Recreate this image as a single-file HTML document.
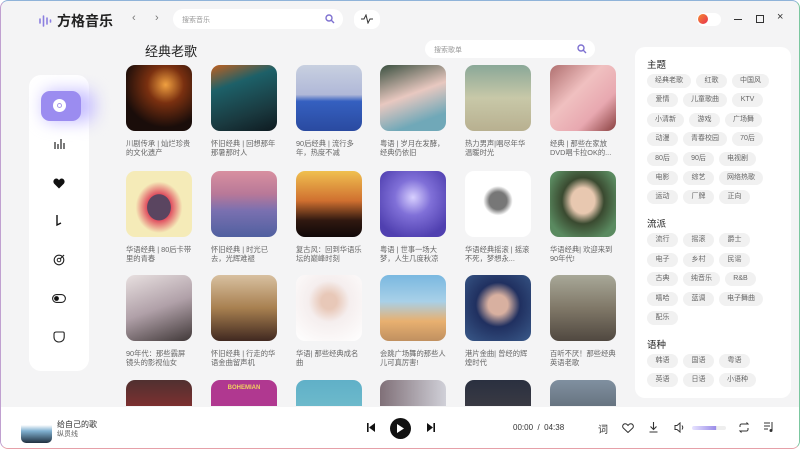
<!DOCTYPE html>
<html><head><meta charset="utf-8"><style>
*{margin:0;padding:0;box-sizing:border-box}
body{width:800px;height:449px;overflow:hidden;background:#fff;font-family:"Liberation Sans","Noto Sans CJK SC",sans-serif}
#win{position:absolute;left:0;top:0;width:800px;height:449px;border-radius:8px;background:#f4f4f5;border:1.5px solid;border-color:#8fb3d9 #7cc7a0 #e6a0a8 #c0a0d0;overflow:hidden}
.abs{position:absolute}
.logo{left:38px;top:10px;font-size:14px;font-weight:bold;color:#222;display:flex;align-items:center;gap:4px}
.search{background:#fff;border-radius:10px;height:20px;font-size:7px;color:#999;padding:6px 0 0 9px}
.card{position:absolute;width:66px}
.card .im{width:66px;height:66px;border-radius:9px}
.card .t{font-size:7.3px;line-height:9px;color:#666;margin-top:8px;height:18px;overflow:hidden}
.side{left:28px;top:74px;width:60px;height:296px;background:#fff;border-radius:12px}
.rp{left:634px;top:46px;width:156px;height:351px;background:#fff;border-radius:10px;padding:10px 0 0 12px}
.rp h4{font-size:9.5px;font-weight:normal;color:#222;margin:0 0 3px}
.tags{display:flex;flex-wrap:wrap;width:128px;gap:5.4px 5px;margin-bottom:12px}
.tags span{background:#f1f1f1;border-radius:7px;height:14px;font-size:7px;color:#666;padding:3px 8px;min-width:31px;text-align:center;line-height:8px;white-space:nowrap}
.bar{left:0;top:406px;width:800px;height:43px;background:#fff}
</style></head><body><div id="win">
<div class="abs logo"><svg width="14" height="12" viewBox="0 0 14 12"><g stroke="#8b7fe0" stroke-width="1.6" stroke-linecap="round"><line x1="1" y1="4" x2="1" y2="8"/><line x1="4.5" y1="1" x2="4.5" y2="11"/><line x1="8" y1="3" x2="8" y2="9"/><line x1="11.5" y1="5" x2="11.5" y2="7"/></g></svg>方格音乐</div>
<div class="abs" style="left:131px;top:11px;font-size:11px;color:#777">‹</div>
<div class="abs" style="left:154px;top:11px;font-size:11px;color:#777">›</div>
<div class="abs search" style="left:172px;top:8px;width:170px">搜索音乐</div>
<svg class="abs" style="left:324px;top:13px" width="10" height="10" viewBox="0 0 10 10"><circle cx="4" cy="4" r="3" fill="none" stroke="#7d70d0" stroke-width="1.4"/><line x1="6.3" y1="6.3" x2="9" y2="9" stroke="#7d70d0" stroke-width="1.4"/></svg>
<div class="abs" style="left:353px;top:9px;width:26px;height:19px;background:#fff;border-radius:8px"></div>
<svg class="abs" style="left:360px;top:13px" width="12" height="10" viewBox="0 0 12 10"><path d="M0 5H3L5 1L7 9L9 5H12" fill="none" stroke="#333" stroke-width="1"/></svg>
<div class="abs" style="left:696px;top:12px;width:24px;height:13px;border-radius:7px;background:#fff"></div>
<div class="abs" style="left:697px;top:13px;width:10px;height:10px;border-radius:50%;background:linear-gradient(135deg,#f58a30,#e83050)"></div>
<div class="abs" style="left:733px;top:18px;width:8px;height:1.3px;background:#333"></div>
<div class="abs" style="left:755px;top:14px;width:8px;height:8px;border:1.3px solid #333"></div>
<div class="abs" style="left:776px;top:10px;font-size:11px;color:#333">×</div>

<div class="abs" style="left:144px;top:40px;font-size:13px;color:#222">经典老歌</div>
<div class="abs search" style="left:424px;top:39px;width:170px;height:18px;padding-top:5px">搜索歌单</div>
<svg class="abs" style="left:576px;top:43px" width="10" height="10" viewBox="0 0 10 10"><circle cx="4" cy="4" r="3" fill="none" stroke="#7d70d0" stroke-width="1.4"/><line x1="6.3" y1="6.3" x2="9" y2="9" stroke="#7d70d0" stroke-width="1.4"/></svg>

<div class="abs side"></div>
<div class="abs" style="left:42px;top:89px;width:52px;height:32px;border-radius:10px;background:#c8c0ff;filter:blur(8px)"></div>
<div class="abs" style="left:40px;top:90px;width:40px;height:30px;border-radius:9px;background:#9b8cf0"></div>
<div class="abs" style="left:52px;top:98px;width:13px;height:13px;border-radius:50%;background:#fff"></div>
<div class="abs" style="left:56px;top:102px;width:5px;height:5px;border-radius:50%;border:1px solid #a89ae8"></div>
<svg class="abs" style="left:52px;top:137px" width="12" height="12" viewBox="0 0 12 12"><g stroke="#222" stroke-width="1.2"><line x1="2" y1="4" x2="2" y2="11"/><line x1="5" y1="6" x2="5" y2="11"/><line x1="8" y1="1" x2="8" y2="11"/><line x1="11" y1="5" x2="11" y2="11"/></g></svg>
<svg class="abs" style="left:52px;top:177px" width="12" height="11" viewBox="0 0 12 11"><path d="M6 10.5L1 5.5C-0.5 3.5 1 0.5 3.3 0.5C4.7 0.5 5.5 1.5 6 2.3C6.5 1.5 7.3 0.5 8.7 0.5C11 0.5 12.5 3.5 11 5.5Z" fill="#111"/></svg>
<svg class="abs" style="left:54px;top:214px" width="8" height="12" viewBox="0 0 8 12"><path d="M2 0V10L6 8" fill="none" stroke="#111" stroke-width="1.4"/></svg>
<svg class="abs" style="left:52px;top:253px" width="12" height="12" viewBox="0 0 12 12"><circle cx="6" cy="6" r="4.8" fill="none" stroke="#222" stroke-width="1.1"/><circle cx="6" cy="6" r="1.8" fill="none" stroke="#222" stroke-width="1"/><line x1="7" y1="5" x2="11" y2="1" stroke="#222" stroke-width="1.2"/></svg>
<svg class="abs" style="left:51px;top:293px" width="14" height="9" viewBox="0 0 14 9"><rect x="0.6" y="0.6" width="12.8" height="7.8" rx="3.9" fill="none" stroke="#222" stroke-width="1.1"/><circle cx="4.5" cy="4.5" r="2.4" fill="#111"/></svg>
<svg class="abs" style="left:52px;top:330px" width="12" height="12" viewBox="0 0 12 12"><path d="M1 3C1 1.5 2 1 3.5 1H10C11 1 11.2 1.5 11.2 2.5V6C11.2 9 9 11 6 11C3 11 1 9 1 6Z" fill="none" stroke="#222" stroke-width="1.1"/></svg>

<div class="abs" style="left:0;top:0;width:630px;height:405px;overflow:hidden">
<div class="card" style="left:125px;top:64px"><div class="im" style="background:radial-gradient(circle at 60% 30%,#f0a040,#7a3010 30%,#1a0d0a 70%)"></div><div class="t">川剧传承 | 灿烂珍贵的文化遗产</div></div>
<div class="card" style="left:210px;top:64px"><div class="im" style="background:linear-gradient(160deg,#c06020 0%,#1d6068 30%,#1a3a40 70%,#0e1a20)"></div><div class="t">怀旧经典 | 回想那年那暑那时人</div></div>
<div class="card" style="left:295px;top:64px"><div class="im" style="background:linear-gradient(180deg,#c8d0e0 0%,#b0b8d8 45%,#3560c0 55%,#2a4aa0)"></div><div class="t">90后经典 | 流行多年，热度不减</div></div>
<div class="card" style="left:379px;top:64px"><div class="im" style="background:linear-gradient(160deg,#3a5040,#e8c8c0 45%,#70a8b8 80%)"></div><div class="t">粤语 | 岁月在发酵，经典仍依旧</div></div>
<div class="card" style="left:464px;top:64px"><div class="im" style="background:linear-gradient(180deg,#8aa898,#c8c8a8 50%,#b8b090)"></div><div class="t">热力男声|唱尽年华温暖时光</div></div>
<div class="card" style="left:549px;top:64px"><div class="im" style="background:linear-gradient(135deg,#b07070,#f0c0c0 40%,#e8a8b0 70%,#8a4040)"></div><div class="t">经典 | 那些在家放DVD唱卡拉OK的...</div></div>

<div class="card" style="left:125px;top:170px"><div class="im" style="background:radial-gradient(ellipse at 50% 55%,#5a4560 25%,#e05060 26%,#f5ebb8 50%)"></div><div class="t">华语经典 | 80后卡带里的青春</div></div>
<div class="card" style="left:210px;top:170px"><div class="im" style="background:linear-gradient(180deg,#d890a0,#b87898 35%,#7a70b0 60%,#5060a0)"></div><div class="t">怀旧经典 | 时光已去，光辉难褪</div></div>
<div class="card" style="left:295px;top:170px"><div class="im" style="background:linear-gradient(180deg,#f0c050,#d07030 45%,#301810 75%,#100808)"></div><div class="t">复古风：回到华语乐坛的巅峰时刻</div></div>
<div class="card" style="left:379px;top:170px"><div class="im" style="background:radial-gradient(circle at 50% 40%,#d8d0ff,#8070d8 35%,#5040b0 80%)"></div><div class="t">粤语 | 世事一场大梦，人生几度秋凉</div></div>
<div class="card" style="left:464px;top:170px"><div class="im" style="background:radial-gradient(circle at 50% 45%,#777 18%,#fff 30%)"></div><div class="t">华语经典摇滚 | 摇滚不死，梦想永...</div></div>
<div class="card" style="left:549px;top:170px"><div class="im" style="background:radial-gradient(ellipse at 50% 45%,#e8c8b0 25%,#3a4a30 45%,#5a8a60 80%)"></div><div class="t">华语经典| 欢迎来到 90年代!</div></div>

<div class="card" style="left:125px;top:274px"><div class="im" style="background:linear-gradient(160deg,#e8e0e0,#b0a0a8 50%,#403838)"></div><div class="t">90年代：那些霸屏镜头的影视仙女</div></div>
<div class="card" style="left:210px;top:274px"><div class="im" style="background:linear-gradient(180deg,#d8c0a0,#a88050 50%,#402820)"></div><div class="t">怀旧经典 | 行走的华语金曲留声机</div></div>
<div class="card" style="left:295px;top:274px"><div class="im" style="background:radial-gradient(circle at 50% 40%,#e8c8b8 15%,#f5eeee 40%,#fff)"></div><div class="t">华语| 那些经典成名曲</div></div>
<div class="card" style="left:379px;top:274px"><div class="im" style="background:linear-gradient(180deg,#7ab8e0,#a8d0e8 40%,#e8b070 70%,#c09060)"></div><div class="t">会跳广场舞的那些人儿可真厉害!</div></div>
<div class="card" style="left:464px;top:274px"><div class="im" style="background:radial-gradient(circle at 50% 45%,#d8b0a0 20%,#203060 45%,#3a5a8a)"></div><div class="t">港片金曲| 曾经的辉煌时代</div></div>
<div class="card" style="left:549px;top:274px"><div class="im" style="background:linear-gradient(180deg,#a8a898,#807868 50%,#504840)"></div><div class="t">百听不厌！那些经典英语老歌</div></div>

<div class="card" style="left:125px;top:379px"><div class="im" style="background:linear-gradient(180deg,#503030,#c03030)"></div></div>
<div class="card" style="left:210px;top:379px"><div class="im" style="background:#b03890"><div style="color:#f0d060;font-size:6px;font-weight:bold;text-align:center;padding-top:5px">BOHEMIAN</div></div></div>
<div class="card" style="left:295px;top:379px"><div class="im" style="background:linear-gradient(180deg,#60b0c8,#80c8d0)"></div></div>
<div class="card" style="left:379px;top:379px"><div class="im" style="background:linear-gradient(90deg,#807078,#d0d0d8)"></div></div>
<div class="card" style="left:464px;top:379px"><div class="im" style="background:linear-gradient(180deg,#2a3040,#504848)"></div></div>
<div class="card" style="left:549px;top:379px"><div class="im" style="background:linear-gradient(180deg,#8090a0,#404850)"></div></div>
</div>

<div class="abs rp">
<h4>主题</h4>
<div class="tags"><span>经典老歌</span><span>红歌</span><span>中国风</span><span>爱情</span><span>儿童歌曲</span><span>KTV</span><span>小清新</span><span>游戏</span><span>广场舞</span><span>动漫</span><span>青春校园</span><span>70后</span><span>80后</span><span>90后</span><span>电视剧</span><span>电影</span><span>综艺</span><span>网络热歌</span><span>运动</span><span>厂牌</span><span>正向</span></div>
<h4>流派</h4>
<div class="tags"><span>流行</span><span>摇滚</span><span>爵士</span><span>电子</span><span>乡村</span><span>民谣</span><span>古典</span><span>纯音乐</span><span>R&amp;B</span><span>嘻哈</span><span>蓝调</span><span>电子舞曲</span><span>配乐</span></div>
<h4>语种</h4>
<div class="tags"><span>韩语</span><span>国语</span><span>粤语</span><span>英语</span><span>日语</span><span>小语种</span></div>
</div>

<div class="abs bar"></div>
<div class="abs" style="left:20px;top:412px;width:31px;height:30px;border-radius:5px;background:linear-gradient(180deg,#fff 40%,#80b0d0 60%,#203040)"></div>
<div class="abs" style="left:56px;top:418px;font-size:8px;color:#333">给自己的歌</div>
<div class="abs" style="left:56px;top:428px;font-size:7px;color:#666">纵贯线</div>
<svg class="abs" style="left:365px;top:422px" width="10" height="9" viewBox="0 0 10 9"><rect x="1" y="0" width="1.6" height="9" fill="#111"/><path d="M9 0V9L3 4.5Z" fill="#111"/></svg>
<div class="abs" style="left:389px;top:417px;width:21px;height:21px;border-radius:50%;background:#111"></div>
<svg class="abs" style="left:396px;top:423px" width="8" height="9" viewBox="0 0 8 9"><path d="M0 0L7 4.5L0 9Z" fill="#fff"/></svg>
<svg class="abs" style="left:425px;top:422px" width="10" height="9" viewBox="0 0 10 9"><path d="M1 0V9L7 4.5Z" fill="#111"/><rect x="7.4" y="0" width="1.6" height="9" fill="#111"/></svg>
<div class="abs" style="left:512px;top:422px;font-size:8px;color:#333">00:00 &nbsp;/ &nbsp;04:38</div>
<div class="abs" style="left:597px;top:420px;font-size:10px;color:#333">词</div>
<svg class="abs" style="left:621px;top:422px" width="12" height="10" viewBox="0 0 12 10"><path d="M6 9.5L1.3 5C0 3.5 0.8 0.7 3.2 0.7C4.5 0.7 5.4 1.6 6 2.4C6.6 1.6 7.5 0.7 8.8 0.7C11.2 0.7 12 3.5 10.7 5Z" fill="none" stroke="#333" stroke-width="1"/></svg>
<svg class="abs" style="left:648px;top:421px" width="9" height="11" viewBox="0 0 9 11"><path d="M4.5 0V7M1.5 4.5L4.5 7.5L7.5 4.5M0.5 10H8.5" fill="none" stroke="#333" stroke-width="1.1"/></svg>
<svg class="abs" style="left:673px;top:421px" width="10" height="11" viewBox="0 0 10 11"><path d="M1 3.5H3L6 1V10L3 7.5H1Z" fill="none" stroke="#333" stroke-width="1"/><path d="M8 3.5Q9.5 5.5 8 7.5" fill="none" stroke="#333" stroke-width="1"/></svg>
<div class="abs" style="left:691px;top:425px;width:34px;height:4px;border-radius:2px;background:linear-gradient(90deg,#e8e4ff,#9a8ce8 70%,#eee 72%)"></div>
<svg class="abs" style="left:737px;top:421px" width="12" height="11" viewBox="0 0 12 11"><path d="M2 5V3.5C2 2.7 2.7 2 3.5 2H10L8.5 0.5M10 6V7.5C10 8.3 9.3 9 8.5 9H2L3.5 10.5" fill="none" stroke="#333" stroke-width="1"/></svg>
<svg class="abs" style="left:763px;top:420px" width="11" height="12" viewBox="0 0 11 12"><path d="M0 2H6M0 5H6M0 8H4M8 1V9" fill="none" stroke="#333" stroke-width="1"/><circle cx="7" cy="9.5" r="1.5" fill="#333"/></svg>
</div></body></html>
